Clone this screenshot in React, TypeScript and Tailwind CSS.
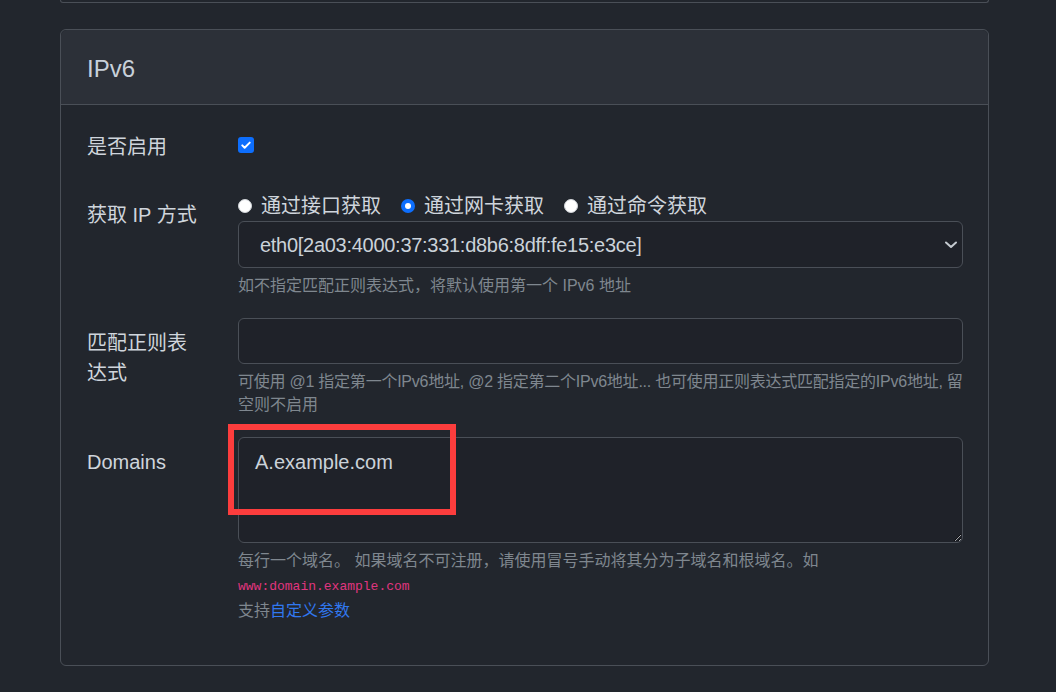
export default function App() {
  return (
    <div className="relative min-h-[692px] w-full bg-[#22262d] font-['Liberation_Sans','Noto_Sans_CJK_SC',sans-serif] text-[#cfd5dc]">
      <div className="pl-[60px]">
        <div className="h-[3px] w-[929px] rounded-b-[6px] border-x border-b border-[#4a4f57]" />
        <div className="mt-[26px] w-[929px] rounded-[6px] border border-[#4a4f57]">
          <div className="flex h-[75px] items-center rounded-t-[6px] border-b border-[#4a4f57] bg-[#2c3038] pl-[26px] pt-[4px] text-[24px] font-medium text-[#c8d0da]">
            IPv6
          </div>
          <div className="pl-[26px] pr-[25px] pt-[17px] pb-[44px]">
            {/* Row 1 */}
            <div className="mb-[20px] flex h-[48px]">
              <div className="w-[151px] shrink-0 pt-[10px] text-[20px] leading-[30px]">是否启用</div>
              <div className="pt-[15px]">
                <div className="flex h-[16px] w-[16px] items-center justify-center rounded-[3px] bg-[#0d6efd]">
                  <svg width="12" height="12" viewBox="0 0 16 16">
                    <path d="M3 8.5l3.2 3.2L13 4.8" fill="none" stroke="#fff" strokeWidth="2.6" strokeLinecap="round" strokeLinejoin="round" />
                  </svg>
                </div>
              </div>
            </div>

            {/* Row 2 */}
            <div className="mb-[20px] flex">
              <div className="w-[151px] shrink-0 pt-[10px] text-[20px] leading-[30px]">获取 IP 方式</div>
              <div className="flex-1">
                <div className="flex h-[31px] items-center pt-[1px] text-[20px]">
                  <span className="h-[14px] w-[14px] rounded-full border border-[#d0d4d8] bg-white" />
                  <span className="ml-[9px] mr-[20px]">通过接口获取</span>
                  <span className="flex h-[14px] w-[14px] items-center justify-center rounded-full bg-[#0d6efd]">
                    <span className="h-[6px] w-[6px] rounded-full bg-white" />
                  </span>
                  <span className="ml-[9px] mr-[20px]">通过网卡获取</span>
                  <span className="h-[14px] w-[14px] rounded-full border border-[#d0d4d8] bg-white" />
                  <span className="ml-[9px]">通过命令获取</span>
                </div>
                <div className="flex h-[47px] items-center justify-between rounded-[6px] border border-[#4a4f57] bg-[#1f2229] pl-[21px] pr-[5px] text-[20px] text-[#cbd2d9]">
                  <span className="tracking-[-0.28px]">eth0[2a03:4000:37:331:d8b6:8dff:fe15:e3ce]</span>
                  <svg width="12" height="8" viewBox="0 0 12 8">
                    <path d="M1 1.5l5 4.5 5-4.5" fill="none" stroke="#c4cad0" strokeWidth="2" strokeLinecap="round" strokeLinejoin="round" />
                  </svg>
                </div>
                <div className="mt-[6px] text-[16px] leading-[24px] text-[#7f878f]">
                  如不指定匹配正则表达式，将默认使用第一个 IPv6 地址
                </div>
              </div>
            </div>

            {/* Row 3 */}
            <div className="mb-[21px] flex">
              <div className="w-[151px] shrink-0 pt-[10px] pr-[40px] text-[20px] leading-[30px]">匹配正则表达式</div>
              <div className="min-w-0 flex-1">
                <input className="block h-[46px] w-full rounded-[6px] border border-[#4a4f57] bg-[#1f2229] outline-none" />
                <div className="mt-[6px] text-[16px] leading-[23px] text-[#7f878f]">
                  <div className="whitespace-nowrap tracking-[-0.24px]">
                    可使用 @1 指定第一个IPv6地址, @2 指定第二个IPv6地址... 也可使用正则表达式匹配指定的IPv6地址, 留
                  </div>
                  <div>空则不启用</div>
                </div>
              </div>
            </div>

            {/* Row 4 */}
            <div className="flex">
              <div className="w-[151px] shrink-0 pt-[10px] text-[20px] leading-[30px]">Domains</div>
              <div className="flex-1">
                <textarea
                  readOnly
                  defaultValue="A.example.com"
                  className="block h-[106px] w-full resize-y rounded-[6px] border border-[#4a4f57] bg-[#1f2229] pl-[16px] pt-[9px] text-[20px] leading-[30px] text-[#cbd2d9] outline-none [color-scheme:dark]"
                />
                <div className="mt-[6px] text-[16px] text-[#7f878f]">
                  <div className="leading-[24px]">每行一个域名。 如果域名不可注册，请使用冒号手动将其分为子域名和根域名。如</div>
                  <div className="font-['Liberation_Mono',monospace] text-[13px] leading-[28px] text-[#e0357f]">www:domain.example.com</div>
                  <div className="leading-[20px]">
                    支持<span className="text-[#3178f0]">自定义参数</span>
                  </div>
                </div>
              </div>
            </div>
          </div>
        </div>
      </div>
      <div className="absolute left-[228px] top-[424px] h-[91px] w-[228px] border-[6px] border-[#fc3d3d]" />
    </div>
  );
}
